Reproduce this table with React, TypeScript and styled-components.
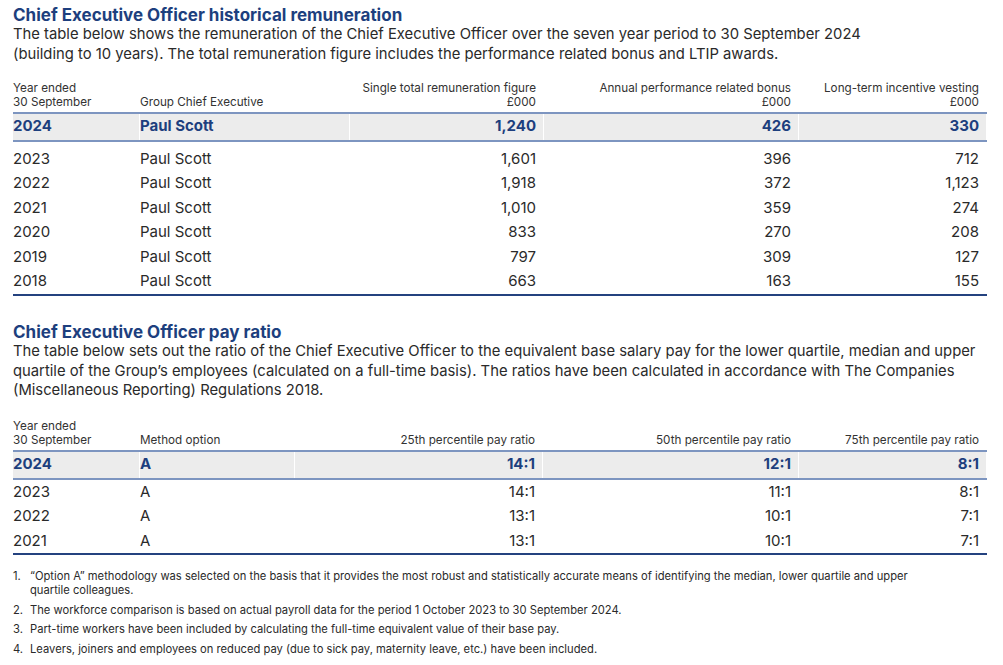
import React from "react";
import styled, { createGlobalStyle } from "styled-components";

const GlobalStyle = createGlobalStyle`
  html, body { margin: 0; padding: 0; background: #ffffff; }
  body { font-family: Inter, "Open Sans", "Liberation Sans", sans-serif; color: #2a2a2a; }
`;

const NAVY = "#1d3f7e";

const Page = styled.div`
  width: 974px;
  padding: 5px 16px 0 13px;
`;

const Section = styled.section<{ $gap: number }>`
  margin-top: ${(p) => p.$gap}px;
`;

const Title = styled.h2`
  margin: 0;
  font-size: 17px;
  line-height: 20px;
  font-weight: 700;
  color: ${NAVY};
`;

const Intro = styled.p`
  margin: 0;
  font-size: 14.8px;
  line-height: 19.7px;
  color: #2a2a2a;
`;

const IntroLine = styled.span`
  display: block;
  white-space: nowrap;
`;

const Table = styled.table<{ $top: number }>`
  width: 974px;
  margin-top: ${(p) => p.$top}px;
  border-collapse: separate;
  border-spacing: 0;
  table-layout: fixed;
`;

const HeadCell = styled.th<{ $align?: string }>`
  font-size: 11.7px;
  line-height: 14px;
  font-weight: 400;
  color: #333;
  text-align: ${(p) => p.$align || "left"};
  vertical-align: bottom;
  padding: 0 8px 3px 0;
  border-bottom: 2px solid #7d95c0;
  box-shadow: inset -1px 0 0 #fff;
  white-space: nowrap;
`;

const Cell = styled.td<{ $align?: string; $hl?: boolean; $pt?: number; $last?: boolean }>`
  font-size: 15px;
  line-height: 24.5px;
  height: 24.5px;
  padding: ${(p) => p.$pt ?? 0}px 8px 0 0;
  text-align: ${(p) => p.$align || "left"};
  color: ${(p) => (p.$hl ? NAVY : "#2a2a2a")};
  font-weight: ${(p) => (p.$hl ? 700 : 400)};
  background: ${(p) => (p.$hl ? "#ececec" : "transparent")};
  border-bottom: ${(p) => (p.$hl ? "2px solid #7d95c0" : p.$last ? "2px solid #24427f" : "none")};
  padding-bottom: ${(p) => (p.$hl ? 1 : 0)}px;
  box-shadow: inset -1px 0 0 #fff;
  white-space: nowrap;
`;

const Notes = styled.ol`
  margin: 14px 0 0 0;
  padding: 0;
  list-style: none;
  width: 915px;
`;

const Note = styled.li`
  display: grid;
  grid-template-columns: 17px 1fr;
  font-size: 11.2px;
  line-height: 14px;
  color: #2a2a2a;
  margin-bottom: 5.5px;
`;

type Col = { label: React.ReactNode; width: number; align?: string };

const remCols: Col[] = [
  { label: <>Year ended<br />30 September</>, width: 127 },
  { label: "Group Chief Executive", width: 210 },
  { label: <>Single total remuneration figure<br />£000</>, width: 194, align: "right" },
  { label: <>Annual performance related bonus<br />£000</>, width: 255, align: "right" },
  { label: <>Long-term incentive vesting<br />£000</>, width: 188, align: "right" },
];

const remRows = [
  ["2024", "Paul Scott", "1,240", "426", "330"],
  ["2023", "Paul Scott", "1,601", "396", "712"],
  ["2022", "Paul Scott", "1,918", "372", "1,123"],
  ["2021", "Paul Scott", "1,010", "359", "274"],
  ["2020", "Paul Scott", "833", "270", "208"],
  ["2019", "Paul Scott", "797", "309", "127"],
  ["2018", "Paul Scott", "663", "163", "155"],
];

const ratioCols: Col[] = [
  { label: <>Year ended<br />30 September</>, width: 127 },
  { label: "Method option", width: 155 },
  { label: "25th percentile pay ratio", width: 248, align: "right" },
  { label: "50th percentile pay ratio", width: 256, align: "right" },
  { label: "75th percentile pay ratio", width: 188, align: "right" },
];

const ratioRows = [
  ["2024", "A", "14:1", "12:1", "8:1"],
  ["2023", "A", "14:1", "11:1", "8:1"],
  ["2022", "A", "13:1", "10:1", "7:1"],
  ["2021", "A", "13:1", "10:1", "7:1"],
];

function DataTable({ cols, rows, top, firstPad }: { cols: Col[]; rows: string[][]; top: number; firstPad: number }) {
  return (
    <Table $top={top}>
      <colgroup>
        {cols.map((c, i) => (
          <col key={i} style={{ width: c.width }} />
        ))}
      </colgroup>
      <thead>
        <tr>
          {cols.map((c, i) => (
            <HeadCell key={i} $align={c.align}>
              {c.label}
            </HeadCell>
          ))}
        </tr>
      </thead>
      <tbody>
        {rows.map((r, ri) => (
          <tr key={ri}>
            {r.map((v, ci) => (
              <Cell
                key={ci}
                $align={cols[ci].align}
                $hl={ri === 0}
                $pt={ri === 1 ? firstPad : 0}
                $last={ri === rows.length - 1}
              >
                {v}
              </Cell>
            ))}
          </tr>
        ))}
      </tbody>
    </Table>
  );
}

export default function App() {
  return (
    <>
      <GlobalStyle />
      <Page>
        <Section $gap={0}>
          <Title>Chief Executive Officer historical remuneration</Title>
          <Intro>
            <IntroLine>The table below shows the remuneration of the Chief Executive Officer over the seven year period to 30 September 2024</IntroLine>
            <IntroLine>(building to 10 years). The total remuneration figure includes the performance related bonus and LTIP awards.</IntroLine>
          </Intro>
          <DataTable cols={remCols} rows={remRows} top={17} firstPad={5} />
        </Section>
        <Section $gap={26}>
          <Title>Chief Executive Officer pay ratio</Title>
          <Intro>
            <IntroLine>The table below sets out the ratio of the Chief Executive Officer to the equivalent base salary pay for the lower quartile, median and upper</IntroLine>
            <IntroLine>quartile of the Group’s employees (calculated on a full-time basis). The ratios have been calculated in accordance with The Companies</IntroLine>
            <IntroLine>(Miscellaneous Reporting) Regulations 2018.</IntroLine>
          </Intro>
          <DataTable cols={ratioCols} rows={ratioRows} top={18} firstPad={0} />
          <Notes>
            <Note>
              <span>1.</span>
              <span>
                “Option A” methodology was selected on the basis that it provides the most robust and statistically accurate means of identifying the median, lower quartile and upper quartile colleagues.
              </span>
            </Note>
            <Note>
              <span>2.</span>
              <span>The workforce comparison is based on actual payroll data for the period 1 October 2023 to 30 September 2024.</span>
            </Note>
            <Note>
              <span>3.</span>
              <span>Part-time workers have been included by calculating the full-time equivalent value of their base pay.</span>
            </Note>
            <Note>
              <span>4.</span>
              <span>Leavers, joiners and employees on reduced pay (due to sick pay, maternity leave, etc.) have been included.</span>
            </Note>
          </Notes>
        </Section>
      </Page>
    </>
  );
}
